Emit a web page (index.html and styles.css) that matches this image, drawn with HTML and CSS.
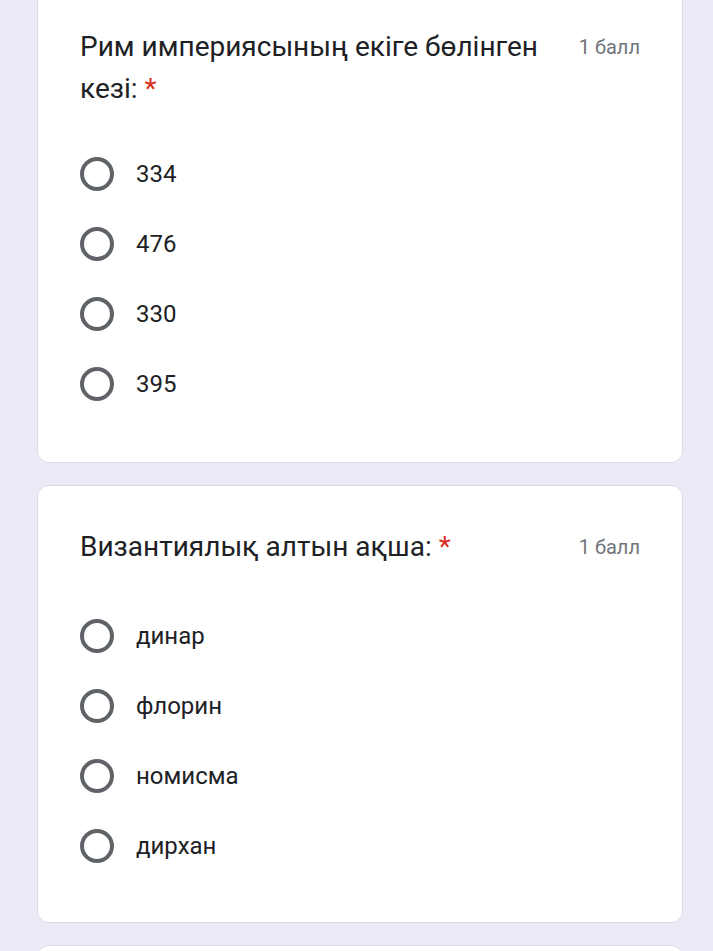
FILE: index.html
```html
<!DOCTYPE html>
<html lang="kk">
<head>
    <meta charset="UTF-8">
    <meta name="viewport" content="width=device-width, initial-scale=1.0">
    <title>Тест</title>
    <link rel="stylesheet" href="styles.css">
</head>
<body>
    <div class="form">
        <div class="card first">
            <div class="question-head">
                <div class="question-title">Рим империясының екіге бөлінген кезі:&nbsp;<span class="required">*</span></div>
                <div class="points">1 балл</div>
            </div>
            <div class="options">
                <label class="option"><span class="radio"></span><span class="option-text">334</span></label>
                <label class="option"><span class="radio"></span><span class="option-text">476</span></label>
                <label class="option"><span class="radio"></span><span class="option-text">330</span></label>
                <label class="option"><span class="radio"></span><span class="option-text">395</span></label>
            </div>
        </div>
        <div class="card">
            <div class="question-head">
                <div class="question-title">Византиялық алтын ақша:&nbsp;<span class="required">*</span></div>
                <div class="points">1 балл</div>
            </div>
            <div class="options">
                <label class="option"><span class="radio"></span><span class="option-text">динар</span></label>
                <label class="option"><span class="radio"></span><span class="option-text">флорин</span></label>
                <label class="option"><span class="radio"></span><span class="option-text">номисма</span></label>
                <label class="option"><span class="radio"></span><span class="option-text">дирхан</span></label>
            </div>
        </div>
        <div class="card empty"></div>
    </div>
</body>
</html>
```

FILE: styles.css
```css
body {
    font-family: Roboto, 'Noto Sans', sans-serif;
    background-color: #ede9f7;
    margin: 0;
    overflow: hidden;
}
.form {
    width: 646px;
    margin: 0 0 0 37px;
    display: flex;
    flex-direction: column;
    gap: 22px;
}
.card {
    background: #fff;
    border: 1px solid #dcdbe3;
    border-radius: 12px;
    padding: 40px 42px 41px 42px;
}
.card.first {
    margin-top: -15px;
    padding-bottom: 43px;
}
.card.empty {
    height: 200px;
}
.question-head {
    display: flex;
    align-items: flex-start;
    gap: 30px;
}
.question-title {
    flex: 1;
    font-size: 28px;
    line-height: 42px;
    color: #202124;
}
.required {
    color: #d93025;
}
.points {
    font-size: 20px;
    line-height: 42px;
    color: #70757a;
    white-space: nowrap;
}
.options {
    margin-top: 33px;
    display: flex;
    flex-direction: column;
}
.first .options {
    margin-top: 29px;
}
.option {
    display: flex;
    align-items: center;
    height: 70px;
    gap: 22px;
}
.radio {
    width: 34px;
    height: 34px;
    box-sizing: border-box;
    border: 4px solid #5f6368;
    border-radius: 50%;
}
.option-text {
    font-size: 24px;
    color: #202124;
}
```
